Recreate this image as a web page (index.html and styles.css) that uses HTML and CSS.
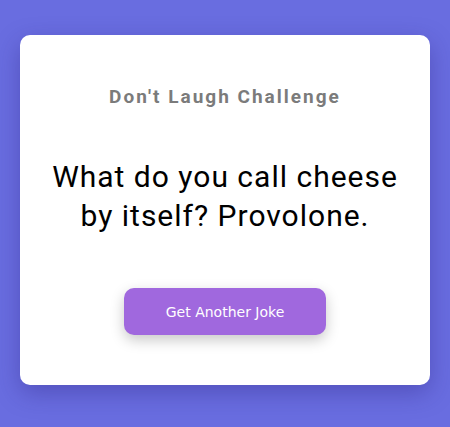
FILE: index.html
```html
<!DOCTYPE html>
<html>
<head>
<meta charset="utf-8">
<link rel="stylesheet" href="styles.css">
</head>
<body>
<main class="card">
  <h1 class="title">Don't Laugh Challenge</h1>
  <p class="joke">What do you call cheese by itself? Provolone.</p>
  <button class="btn">Get Another Joke</button>
</main>
</body>
</html>
```
FILE: styles.css
```css
html, body { margin: 0; height: 100%; }
body {
  background: #696de0;
  padding: 35px 20px 42px;
  box-sizing: border-box;
  font-family: Roboto, "Liberation Sans", sans-serif;
}
.card {
  background: #fff;
  border-radius: 10px;
  box-shadow: 0 8px 24px rgba(40, 30, 120, 0.35);
  height: 350px;
  box-sizing: border-box;
  padding: 51px 20px 49px;
  display: flex;
  flex-direction: column;
  align-items: center;
  text-align: center;
}
.title {
  margin: 0;
  font-size: 19px;
  line-height: 22px;
  font-weight: 700;
  letter-spacing: 2px;
  color: #7b7b7b;
}
.joke {
  margin: 49px 0 0;
  font-size: 30px;
  line-height: 39px;
  letter-spacing: 1px;
  color: #000;
  max-width: 360px;
}
.btn {
  margin-top: 53px;
  width: 202px;
  height: 47px;
  border: none;
  border-radius: 10px;
  background: #a068de;
  color: #fff;
  font-family: "DejaVu Sans", sans-serif;
  font-size: 14px;
  box-shadow: 0 5px 14px rgba(0, 0, 0, 0.22);
}
```
